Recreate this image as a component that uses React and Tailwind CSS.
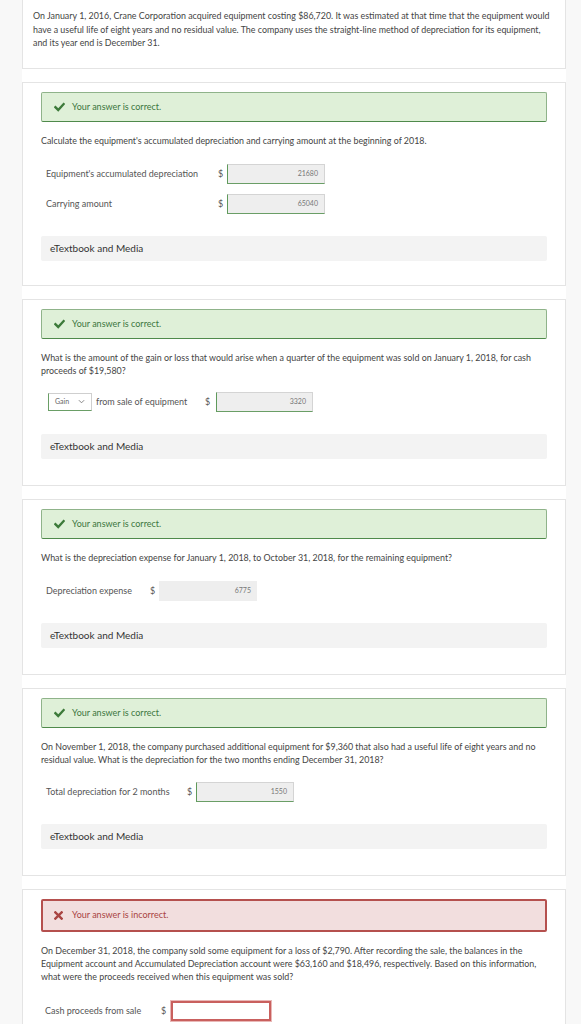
import React from 'react';

const font = { fontFamily: 'Lato, "Open Sans", sans-serif' };

const CheckIcon = () => (
  <svg width="11" height="10" viewBox="0 0 12 10" className="shrink-0">
    <path d="M1.5 5.2 L4.6 8.2 L10.5 1.8" fill="none" stroke="#3d7a3a" strokeWidth="2.6" strokeLinecap="square" />
  </svg>
);

const CrossIcon = () => (
  <svg width="9" height="9" viewBox="0 0 10 10" className="shrink-0">
    <path d="M1.5 1.5 L8.5 8.5 M8.5 1.5 L1.5 8.5" fill="none" stroke="#a94442" strokeWidth="2.6" strokeLinecap="square" />
  </svg>
);

const Banner = ({ correct }) =>
  correct ? (
    <div className="h-[30px] flex items-center gap-[7px] pl-[12px] bg-[#dff0d8] border border-[#8fb38a] border-b-[#4f8a4b] rounded-[2px]">
      <CheckIcon />
      <span className="text-[9px] text-[#3c763d]">Your answer is correct.</span>
    </div>
  ) : (
    <div className="h-[33px] flex items-center gap-[9px] pl-[11px] bg-[#f2dede] border-2 border-[#b5504e] rounded-[2px]">
      <CrossIcon />
      <span className="text-[9px] text-[#a94442]">Your answer is incorrect.</span>
    </div>
  );

const Media = () => (
  <div className="mt-[22px] h-[25px] flex items-center pl-[9px] bg-[#f3f3f3] rounded-[2px] text-[10px] text-[#333]">
    eTextbook and Media
  </div>
);

const Amount = ({ value, variant = 'green', w = 'w-[95px]' }) => {
  const styles = {
    green: 'bg-[#eeeeee] border border-[#d4d4d4] border-l-[#5f9a5b] border-b-[#6a9e66]',
    plain: 'bg-[#eeeeee]',
    red: 'bg-white border-2 border-[#c9605e] outline outline-1 outline-[#e9b8b7]',
  };
  return (
    <div className={`${w} h-[20px] flex items-center justify-end pr-[6px] text-[7px] text-[#777] ${styles[variant]}`}>
      {value}
    </div>
  );
};

const Row = ({ label, labelW, dollarW = 'w-[9px]', value, variant, w, className = '' }) => (
  <div className={`flex items-center h-[20px] ${className}`}>
    <span className={`${labelW} text-[9px] text-[#555]`}>{label}</span>
    <span className={`${dollarW} text-[9px] text-[#555]`}>$</span>
    <Amount value={value} variant={variant} w={w} />
  </div>
);

const Question = ({ children }) => (
  <p className="mt-[12px] text-[8.9px] leading-[13px] text-[#444]">{children}</p>
);

export default function App() {
  return (
    <div className="min-h-screen bg-[#f8f8f8]" style={font}>
      <div className="ml-[22px] w-[544px]">
        <div className="bg-white border-x border-b border-[#e4e4e4] pt-[9px] pb-[18px] pl-[10px] pr-[8px]">
          <p className="text-[8.9px] leading-[13.5px] text-[#444]">
            On January 1, 2016, Crane Corporation acquired equipment costing $86,720. It was estimated at that time that the equipment would have a useful life of eight years and no residual value. The company uses the straight-line method of depreciation for its equipment, and its year end is December 31.
          </p>
        </div>
        <div className="h-[13px] bg-white" />

        <div className="bg-white border border-[#e4e4e4] pt-[9px] pb-[24px] px-[18px]">
          <Banner correct />
          <Question>Calculate the equipment's accumulated depreciation and carrying amount at the beginning of 2018.</Question>
          <div className="pl-[5px]">
            <Row className="mt-[17px]" label="Equipment's accumulated depreciation" labelW="w-[172px]" value="21680" w="w-[98px]" />
            <Row className="mt-[10px]" label="Carrying amount" labelW="w-[172px]" value="65040" w="w-[98px]" />
          </div>
          <Media />
        </div>
        <div className="h-[13px] bg-white" />

        <div className="bg-white border border-[#e4e4e4] pt-[9px] pb-[26px] px-[18px]">
          <Banner correct />
          <Question>What is the amount of the gain or loss that would arise when a quarter of the equipment was sold on January 1, 2018, for cash proceeds of $19,580?</Question>
          <div className="mt-[15px] pl-[7px] flex items-center h-[20px]">
            <div className="w-[44px] h-[18px] flex items-center justify-between px-[6px] bg-white border border-[#cfcfcf] border-l-[#6a9e66] border-b-[#6a9e66]">
              <span className="text-[7px] text-[#666]">Gain</span>
              <svg width="7" height="5" viewBox="0 0 8 5">
                <path d="M1 1 L4 4 L7 1" fill="none" stroke="#777" strokeWidth="1" />
              </svg>
            </div>
            <span className="ml-[4px] w-[109px] text-[9px] text-[#555]">from sale of equipment</span>
            <span className="text-[9px] text-[#555] w-[11px]">$</span>
            <Amount value="3320" variant="green" w="w-[97px]" />
          </div>
          <Media />
        </div>
        <div className="h-[13px] bg-white" />

        <div className="bg-white border border-[#e4e4e4] pt-[9px] pb-[26px] px-[18px]">
          <Banner correct />
          <Question>What is the depreciation expense for January 1, 2018, to October 31, 2018, for the remaining equipment?</Question>
          <div className="pl-[5px]">
            <Row className="mt-[17px]" label="Depreciation expense" labelW="w-[104px]" value="6775" variant="plain" w="w-[98px]" />
          </div>
          <Media />
        </div>
        <div className="h-[13px] bg-white" />

        <div className="bg-white border border-[#e4e4e4] pt-[9px] pb-[26px] px-[18px]">
          <Banner correct />
          <Question>On November 1, 2018, the company purchased additional equipment for $9,360 that also had a useful life of eight years and no residual value. What is the depreciation for the two months ending December 31, 2018?</Question>
          <div className="pl-[5px]">
            <Row className="mt-[16px]" label="Total depreciation for 2 months" labelW="w-[141px]" value="1550" w="w-[98px]" />
          </div>
          <Media />
        </div>
        <div className="h-[13px] bg-white" />

        <div className="bg-white border border-[#e4e4e4] pt-[9px] pb-[26px] px-[18px]">
          <Banner />
          <Question>On December 31, 2018, the company sold some equipment for a loss of $2,790. After recording the sale, the balances in the Equipment account and Accumulated Depreciation account were $63,160 and $18,496, respectively. Based on this information, what were the proceeds received when this equipment was sold?</Question>
          <div className="pl-[4px]">
            <Row className="mt-[18px]" label="Cash proceeds from sale" labelW="w-[116px]" dollarW="w-[10px]" value="" variant="red" w="w-[100px]" />
          </div>
        </div>
      </div>
    </div>
  );
}
